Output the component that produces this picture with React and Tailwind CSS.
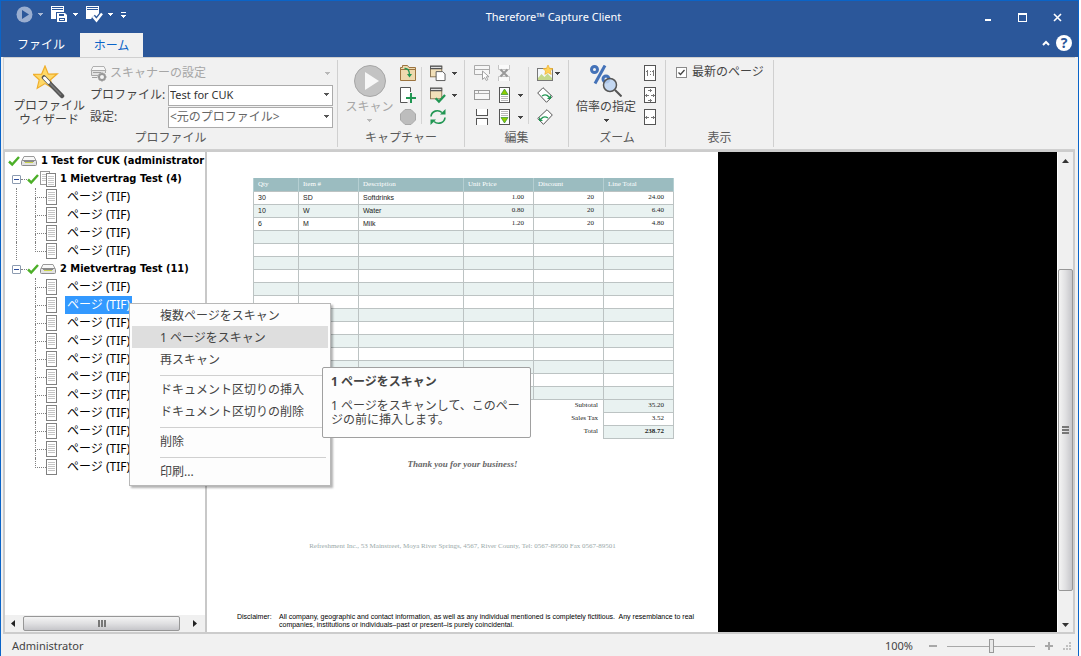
import React, { useState } from 'react';

const items = [
  { qty: '30', item: 'SD', desc: 'Softdrinks', price: '1.00', discount: '20', total: '24.00' },
  { qty: '10', item: 'W', desc: 'Water', price: '0.80', discount: '20', total: '6.40' },
  { qty: '6', item: 'M', desc: 'Milk', price: '1.20', discount: '20', total: '4.80' },
];
const emptyRows = 13;

const documents = [
  { name: '1 Mietvertrag Test (4)', icon: 'pages', pages: 4 },
  { name: '2 Mietvertrag Test (11)', icon: 'scanner', pages: 11, selected: 1 },
];

/* ---------- Icons ---------- */

function Caret({ className = 'text-[#444444]' }) {
  return (
    <svg width="5" height="3" viewBox="0 0 5 3" className={`shrink-0 ${className}`} shapeRendering="crispEdges">
      <path d="M0 0h5v1H4v1H3v1H2V2H1V1H0z" fill="currentColor" />
    </svg>
  );
}

function Check() {
  return (
    <svg width="12" height="12" viewBox="0 0 12 12" className="shrink-0">
      <path d="M1 6.5l3.2 3L11 2" fill="none" stroke="#4caf28" strokeWidth="2.4" />
    </svg>
  );
}

function ScannerIcon() {
  return (
    <svg width="16" height="16" viewBox="0 0 16 16" className="shrink-0">
      <path d="M3 3.5h10l2 4H1z" fill="#f8f8f8" stroke="#9a9a9a" />
      <rect x=".5" y="7.5" width="15" height="5" rx="1" fill="#e2e2e2" stroke="#8c8c8c" />
      <rect x="3" y="8" width="10" height="1" fill="#8a8a8a" />
      <rect x="4" y="9" width="8" height="1" fill="#c9d34a" />
    </svg>
  );
}

function PagesIcon() {
  return (
    <svg width="16" height="16" viewBox="0 0 16 16" className="shrink-0" shapeRendering="crispEdges">
      <rect x=".5" y=".5" width="9" height="13" fill="#fff" stroke="#9a9a9a" />
      <path d="M2 3.5h5M2 5.5h5M2 7.5h5M2 9.5h5" stroke="#c8c8c8" />
      <rect x="6.5" y="2.5" width="9" height="13" fill="#fff" stroke="#808080" />
      <path d="M8 5.5h6M8 7.5h6M8 9.5h6M8 11.5h6M8 13.5h6" stroke="#c8c8c8" />
    </svg>
  );
}

function PageIcon() {
  return (
    <svg width="11" height="16" viewBox="0 0 11 16" className="shrink-0" shapeRendering="crispEdges">
      <rect x=".5" y=".5" width="10" height="15" fill="#fff" stroke="#808080" />
      <path d="M2 3.5h7M2 5.5h7M2 7.5h7M2 9.5h7M2 11.5h7" stroke="#c4c4c4" />
    </svg>
  );
}

function WandIcon() {
  return (
    <svg width="32" height="34" viewBox="0 0 32 34">
      <path d="M12 1l3.3 8.2 9-.4-6.8 6 2.2 8.4L12 18.6l-7.8 4.6 2-8.4L0 9.3l8.7-.2z" fill="#ffd968" stroke="#efae2c" strokeWidth="1.2" />
      <path d="M11 12.5L29 31" stroke="#555" strokeWidth="4.5" strokeLinecap="round" />
      <path d="M17 18.5l11 11.5" stroke="#7a7a7a" strokeWidth="1.5" />
      <path d="M11.5 13l4 4.3" stroke="#fff" strokeWidth="3" strokeLinecap="round" />
    </svg>
  );
}

function ScannerSettingsIcon() {
  return (
    <svg width="17" height="17" viewBox="0 0 17 17" className="shrink-0">
      <path d="M3 1.5h11l2 4H1z" fill="#f6f6f6" stroke="#b0b0b0" />
      <path d="M8 10.5H1.5v-5h14V8" fill="#e2e2e2" stroke="#a8a8a8" />
      <path d="M3 7.5h8M2 12.5h5" stroke="#a0a0a0" />
      <circle cx="12" cy="12" r="3" fill="#f4f4f4" stroke="#999" strokeWidth="2" />
      <path d="M12 7.5v2M12 14.5v2M7.5 12h2M14.5 12h2M9 9l1 1M14 14l1 1M9 15l1-1M14 10l1-1" stroke="#999" strokeWidth="1.5" />
    </svg>
  );
}

function PlayIcon() {
  return (
    <svg width="32" height="32" viewBox="0 0 32 32">
      <circle cx="16" cy="16" r="15.5" fill="#c3c3c3" stroke="#a6a6a6" />
      <path d="M11 7v18l14-9z" fill="#f7f7f7" />
    </svg>
  );
}

function FolderIcon() {
  return (
    <svg width="16" height="16" viewBox="0 0 16 16">
      <path d="M.5 15.5v-13h2v-2h5l1.5 2h6.5v13z" fill="#eed9ae" stroke="#9c7440" />
      <path d="M1 4.5h14" stroke="#9c7440" />
      <path d="M4.5 3.5c3-.5 5 2 5 6" fill="none" stroke="#219653" strokeWidth="1.4" />
      <path d="M7 9h5l-2.5 3.5z" fill="#219653" />
    </svg>
  );
}

function AddPageIcon() {
  return (
    <svg width="16" height="16" viewBox="0 0 16 16">
      <path d="M10.5 5V.5H.5v15h7" fill="#fff" stroke="#555" />
      <path d="M11 6v10M6 11h10" stroke="#219653" strokeWidth="2" />
    </svg>
  );
}

function StopIcon() {
  return (
    <svg width="16" height="16" viewBox="0 0 16 16">
      <path d="M5 .5h6L15.5 5v6L11 15.5H5L.5 11V5z" fill="#bdbdbd" stroke="#a8a8a8" />
    </svg>
  );
}

function BatchIcon({ check }) {
  return (
    <svg width="17" height="17" viewBox="0 0 17 17">
      <rect x=".5" y="1" width="12" height="11" fill="#f1dfb8" stroke="#8a7350" />
      <rect x="0" y="0" width="13" height="4" fill="#555" />
      <path d="M1 2h11" stroke="#fff" />
      {check ? (
        <path d="M6 11.5l3.5 3.5L16 8" fill="none" stroke="#219653" strokeWidth="2.4" />
      ) : (
        <path d="M6.5 6.5h7l2.5 2.5v7H6.5z" fill="#fff" stroke="#555" />
      )}
    </svg>
  );
}

function RefreshIcon() {
  return (
    <svg width="16" height="16" viewBox="0 0 16 16">
      <path d="M1 7.5C1.5 2 8 0 12 3.5M15 8.5C14.5 14 8 16 4 12.5" fill="none" stroke="#219653" strokeWidth="1.6" />
      <path d="M10 5.5h5.5V0zM6 10.5H.5V16z" fill="#219653" />
    </svg>
  );
}

function SelectRowIcon() {
  return (
    <svg width="16" height="16" viewBox="0 0 16 16">
      <path d="M8 9.5H.5v-9h15V9" fill="#f6f6f6" stroke="#aaa" />
      <path d="M1 4.5h14" stroke="#aaa" />
      <path d="M8.5 6v8.5l2.2-2 1.6 3 1.5-.8-1.5-2.9h2.7z" fill="#fff" stroke="#a0a0a0" />
    </svg>
  );
}

function DeleteBreakIcon() {
  return (
    <svg width="12" height="16" viewBox="0 0 12 16">
      <path d="M.5 0v4.5h11V0M.5 16v-4.5h11V16" fill="#fafafa" stroke="#c4c4c4" />
      <path d="M2.5 4.5l7 7M9.5 4.5l-7 7" stroke="#999" strokeWidth="2" />
    </svg>
  );
}

function RowIcon() {
  return (
    <svg width="16" height="10" viewBox="0 0 16 10" shapeRendering="crispEdges">
      <rect x=".5" y=".5" width="15" height="9" fill="#f6f6f6" stroke="#999" />
      <path d="M1 3.5h14M4.5 1v3" stroke="#aaa" />
    </svg>
  );
}

function SplitIcon() {
  return (
    <svg width="12" height="16" viewBox="0 0 12 16" shapeRendering="crispEdges">
      <path d="M.5 0v6.5h11V0M.5 16V9.5h11V16" fill="#fff" stroke="#555" />
    </svg>
  );
}

function MovePageIcon({ down }) {
  return (
    <svg width="11" height="16" viewBox="0 0 11 16">
      <rect x=".5" y=".5" width="10" height="15" fill="#fff" stroke="#555" />
      {down ? (
        <>
          <path d="M2 2.5h7M2 4.5h7M2 6.5h7" stroke="#b8b8b8" />
          <path d="M2 8.5h7l-3.5 5.5z" fill="#8fce00" stroke="#2f8f2f" strokeWidth=".7" />
        </>
      ) : (
        <>
          <path d="M2 9.5h7M2 11.5h7M2 13.5h7" stroke="#b8b8b8" />
          <path d="M2 7.5h7L5.5 2z" fill="#8fce00" stroke="#2f8f2f" strokeWidth=".7" />
        </>
      )}
    </svg>
  );
}

function ImageIcon() {
  return (
    <svg width="16" height="16" viewBox="0 0 16 16">
      <rect x=".5" y="3.5" width="15" height="12" fill="#f4f8fb" stroke="#777" />
      <path d="M1 13l3.5-4 3 3 3-3.5L15 13v2H1z" fill="#c5d98a" />
      <path d="M11 0l1.5 3.3 3.5.3-2.6 2.3.8 3.5L11 7.6 7.8 9.4l.8-3.5L6 3.6l3.5-.3z" fill="#ffd257" stroke="#efb02e" strokeWidth=".7" />
    </svg>
  );
}

function RotateIcon({ left }) {
  return (
    <svg width="16" height="16" viewBox="0 0 16 16">
      {left ? (
        <>
          <path d="M10 .7l5.3 5.3L6.5 15.3.7 9.5z" fill="#fff" stroke="#555" />
          <path d="M4 10c2-2.5 4-3 7-1" fill="none" stroke="#219653" strokeWidth="1.4" />
          <path d="M2 8v4h4z" fill="#219653" />
        </>
      ) : (
        <>
          <path d="M6 .7L.7 6l8.8 9.3 5.8-5.8z" fill="#fff" stroke="#555" />
          <path d="M12 10c-2-2.5-4-3-7-1" fill="none" stroke="#219653" strokeWidth="1.4" />
          <path d="M14 8v4h-4z" fill="#219653" />
        </>
      )}
    </svg>
  );
}

function PercentIcon() {
  return (
    <svg width="32" height="32" viewBox="0 0 32 32">
      <circle cx="4.5" cy="4.5" r="3" fill="none" stroke="#4472b8" strokeWidth="3" />
      <circle cx="16" cy="14" r="3" fill="none" stroke="#4472b8" strokeWidth="3" />
      <path d="M15 .5L5 18.5" stroke="#4472b8" strokeWidth="3" />
      <circle cx="20" cy="20" r="6.5" fill="#bcd4f2" fillOpacity=".85" stroke="#555" strokeWidth="1.5" />
      <path d="M25 25l6.5 6.5" stroke="#555" strokeWidth="2" />
    </svg>
  );
}

function ZoomPageIcon({ mode }) {
  return (
    <svg width="12" height="16" viewBox="0 0 12 16" shapeRendering="crispEdges">
      <rect x=".5" y=".5" width="11" height="15" fill="#fff" stroke="#555" />
      {mode === 'actual' && <path d="M3.5 5v6M2 6.5h2M9.5 5v6M8 6.5h2M6 6v1M6 9v1" stroke="#777" />}
      {mode !== 'actual' && <path d="M1 8.5h4M7 8.5h4M2.5 7v3M9.5 7v3" stroke="#777" />}
      {mode === 'page' && <path d="M6 2v3M6 12v3M4 3.5h4M4 13.5h4" stroke="#777" />}
    </svg>
  );
}

function QuickIcon({ check }) {
  return (
    <svg width="17" height="17" viewBox="0 0 17 17">
      <rect x="0" y="0" width="13" height="13" fill="#fff" />
      <path d="M1 1.5h11M1 3.5h11" stroke="#2b579a" />
      {check ? (
        <>
          <path d="M7 10.5l3.5 4L16 7.5" fill="none" stroke="#2b579a" strokeWidth="5" />
          <path d="M7 10.5l3.5 4L16 7.5" fill="none" stroke="#fff" strokeWidth="2.4" />
        </>
      ) : (
        <>
          <rect x="5" y="6" width="12" height="11" fill="#2b579a" />
          <path d="M6 7h8l2 2v7H6z" fill="#fff" />
          <path d="M8 8h5v2H8zM8 12h6v3H8z" fill="#2b579a" />
          <path d="M9 13.5h4" stroke="#fff" />
        </>
      )}
    </svg>
  );
}

/* ---------- Title bar ---------- */

function TitleBar() {
  return (
    <header className="bg-[#2b579a] text-white">
      <div className="flex h-8 items-center">
        <div className="flex h-full w-[136px] items-center gap-[5px] pl-[15px] pb-[5px]">
          <button aria-label="スキャン">
            <svg width="17" height="17" viewBox="0 0 17 17">
              <circle cx="8.5" cy="8.5" r="8" fill="#9aaed0" />
              <path d="M6 4v9l7-4.5z" fill="#2b579a" />
            </svg>
          </button>
          <button aria-label="スキャン メニュー"><Caret className="text-[#a9b9d5]" /></button>
          <button aria-label="保存" className="ml-[3px]"><QuickIcon /></button>
          <button aria-label="保存 メニュー"><Caret className="text-white" /></button>
          <button aria-label="完了" className="ml-[3px]"><QuickIcon check /></button>
          <button aria-label="完了 メニュー"><Caret className="text-white" /></button>
          <button aria-label="カスタマイズ" className="ml-[3px] flex flex-col items-center gap-[2px]">
            <span className="h-px w-[5px] bg-white" />
            <Caret className="text-white" />
          </button>
        </div>
        <h1 className="flex-1 text-center text-[11px]">Therefore™ Capture Client</h1>
        <div className="mr-[3px] flex">
          <button aria-label="最小化" className="flex h-6 w-[35px] items-center justify-center">
            <span className="mt-[6px] h-[2px] w-[6px] bg-white" />
          </button>
          <button aria-label="最大化" className="flex h-6 w-[35px] items-center justify-center">
            <span className="h-[9px] w-[9px] border border-t-2 border-white" />
          </button>
          <button aria-label="閉じる" className="flex h-6 w-[35px] items-center justify-center">
            <svg width="9" height="9" viewBox="0 0 9 9"><path d="M1 1l7 7M8 1L1 8" stroke="#fff" strokeWidth="1.6" /></svg>
          </button>
        </div>
      </div>
      <nav className="flex h-6 items-start pl-[5px]">
        <button className="h-6 w-[74px] pr-1 text-center">ファイル</button>
        <button className="h-[25px] w-[63px] bg-[#f1f1f1] text-center text-[#0a64c8]">ホーム</button>
        <div className="ml-auto mr-[6px] flex items-center gap-[6px] pt-[2px]">
          <button aria-label="リボンを折りたたむ">
            <svg width="8" height="6" viewBox="0 0 8 6"><path d="M1 5l3-3 3 3" fill="none" stroke="#fff" strokeWidth="2" /></svg>
          </button>
          <button aria-label="ヘルプ" className="h-4 w-4 rounded-full bg-white text-sm leading-4 font-bold text-[#2b579a]">?</button>
        </div>
      </nav>
    </header>
  );
}

/* ---------- Ribbon ---------- */

function Group({ label, className, children }) {
  return (
    <section className={`flex shrink-0 flex-col border-r border-[#d0d0d0] ${className}`}>
      <div className="flex h-[67px] pt-[2px]">{children}</div>
      <div className="mt-[2px] h-[18px] text-center leading-[18px] text-[#5a5a5a]">{label}</div>
    </section>
  );
}

function IconButton({ label, caret, disabled, className = 'w-4', children }) {
  return (
    <div className="flex h-[22px] items-center gap-[6px]">
      <button aria-label={label} disabled={disabled} className={`flex justify-center ${className}`}>{children}</button>
      {caret && <button aria-label={`${label} メニュー`}><Caret /></button>}
    </div>
  );
}

function ComboBox({ id, label, value, muted }) {
  return (
    <div className="flex h-[22px] items-center">
      <label htmlFor={id} className="w-[78px] whitespace-nowrap">{label}</label>
      <div className="relative">
        <select id={id} className={`block h-[21px] w-[165px] appearance-none border border-[#ababab] bg-white pl-[1px] ${muted ? 'text-xs text-[#666666]' : 'text-[11px] text-[#333333]'}`}>
          <option>{value}</option>
        </select>
        <span className="pointer-events-none absolute top-2 right-1"><Caret className="text-[#555555]" /></span>
      </div>
    </div>
  );
}

function Divider() {
  return <div className="mt-[5px] h-[57px] w-px bg-[#d4d4d4]" />;
}

function Ribbon() {
  const [latest, setLatest] = useState(true);
  return (
    <div className="mr-[3px] ml-[2px] flex border-t border-b border-l border-[#d0d0d0] pt-[2px] pb-[2px] text-[#444444]">
      <Group label="プロファイル" className="w-[334px]">
        <button className="ml-[7px] flex w-[76px] flex-col items-center pt-[3px] leading-[14px]">
          <WandIcon />
          <span className="whitespace-nowrap">プロファイル</span>
          <span>ウィザード</span>
        </button>
        <div className="ml-[3px]">
          <button disabled className="flex h-[22px] w-[240px] items-center gap-[3px] text-[#a6a6a6]">
            <ScannerSettingsIcon />
            <span>スキャナーの設定</span>
            <span className="ml-auto"><Caret className="text-[#b8b8b8]" /></span>
          </button>
          <ComboBox id="profile" label="プロファイル:" value="Test for CUK" />
          <ComboBox id="setting" label="設定:" value="<元のプロファイル>" muted />
        </div>
      </Group>

      <Group label="キャプチャー" className="w-[127px]">
        <button disabled className="ml-[6px] flex w-[51px] flex-col items-center pt-[3px] text-[#a6a6a6]">
          <PlayIcon />
          <span className="mt-[2px] leading-4 whitespace-nowrap">スキャン</span>
          <span className="mt-1"><Caret className="text-[#b8b8b8]" /></span>
        </button>
        <div className="ml-[5px]">
          <IconButton label="ファイルの取り込み"><FolderIcon /></IconButton>
          <IconButton label="ページの追加"><AddPageIcon /></IconButton>
          <IconButton label="停止" disabled><StopIcon /></IconButton>
        </div>
        <div className="ml-[5px]"><Divider /></div>
        <div className="ml-2">
          <IconButton label="バッチの保存" caret><BatchIcon /></IconButton>
          <IconButton label="バッチの完了" caret><BatchIcon check /></IconButton>
          <IconButton label="更新"><RefreshIcon /></IconButton>
        </div>
      </Group>

      <Group label="編集" className="w-[104px]">
        <div className="ml-[9px]">
          <IconButton label="行の選択" disabled><SelectRowIcon /></IconButton>
          <IconButton label="行" disabled><RowIcon /></IconButton>
          <IconButton label="分割"><SplitIcon /></IconButton>
        </div>
        <div className="ml-[6px]">
          <IconButton label="区切りの削除" disabled><DeleteBreakIcon /></IconButton>
          <IconButton label="上へ移動" caret><MovePageIcon /></IconButton>
          <IconButton label="下へ移動" caret><MovePageIcon down /></IconButton>
        </div>
        <div className="ml-[5px]"><Divider /></div>
        <div className="ml-2">
          <div className="flex h-[22px] items-center gap-[2px]">
            <button aria-label="画像の編集"><ImageIcon /></button>
            <button aria-label="画像の編集 メニュー"><Caret /></button>
          </div>
          <IconButton label="右に回転"><RotateIcon /></IconButton>
          <IconButton label="左に回転"><RotateIcon left /></IconButton>
        </div>
      </Group>

      <Group label="ズーム" className="w-[97px]">
        <button className="ml-1 flex w-[66px] flex-col items-center pt-[3px]">
          <PercentIcon />
          <span className="mt-[2px] leading-4 whitespace-nowrap">倍率の指定</span>
          <span className="mt-1"><Caret /></span>
        </button>
        <div className="ml-[3px]">
          <IconButton label="実際のサイズ"><ZoomPageIcon mode="actual" /></IconButton>
          <IconButton label="ページ全体"><ZoomPageIcon mode="page" /></IconButton>
          <IconButton label="ページ幅"><ZoomPageIcon mode="width" /></IconButton>
        </div>
      </Group>

      <Group label="表示" className="w-[108px]">
        <label className="ml-[10px] flex h-5 items-center gap-[5px] whitespace-nowrap">
          <span className="relative flex">
            <input
              type="checkbox"
              checked={latest}
              onChange={e => setLatest(e.target.checked)}
              className="h-[11px] w-[11px] appearance-none border border-[#8a8a8a] bg-white"
            />
            {latest && (
              <svg width="11" height="11" viewBox="0 0 11 11" className="pointer-events-none absolute inset-0">
                <path d="M2.5 5.5l2 2 4-4.5" fill="none" stroke="#444" strokeWidth="1.3" />
              </svg>
            )}
          </span>
          最新のページ
        </label>
      </Group>
    </div>
  );
}

/* ---------- Tree ---------- */

// dotted elbow between a parent and its row
function Elbow({ last, className }) {
  return (
    <span className={`flex h-[18px] shrink-0 flex-col ${className}`}>
      <span className="h-[10px] border-b border-l border-dotted border-[#808080]" />
      <span className={`h-2 ${last ? '' : 'border-l border-dotted border-[#808080]'}`} />
    </span>
  );
}

function TreePanel() {
  const bold = "font-['DejaVu_Sans_Condensed','Noto_Sans',sans-serif] text-[11px] font-bold";
  return (
    <aside className="flex w-[200px] shrink-0 flex-col bg-white text-black">
      <div className="flex-1 overflow-hidden leading-[18px] whitespace-nowrap">
        <div className="flex h-[18px] items-center gap-px pl-[3px]">
          <Check />
          <ScannerIcon />
          <span className={`pl-[3px] leading-[18px] ${bold}`}>1 Test for CUK (administrator</span>
        </div>
        <ul>
          {documents.map((doc, d) => (
            <li key={doc.name}>
              <div className="flex h-[18px] items-center pl-[7px]">
                <button aria-label="折りたたむ" className="flex h-[9px] w-[9px] items-center justify-center rounded-[1px] border border-[#8c9bb0] bg-white">
                  <span className="h-px w-[5px] bg-[#2c4b9b]" />
                </button>
                <span className="w-[6px] border-b border-dotted border-[#808080]" />
                <Check />
                <span className="ml-px">{doc.icon === 'pages' ? <PagesIcon /> : <ScannerIcon />}</span>
                <span className={`pl-1 leading-[18px] ${bold}`}>{doc.name}</span>
              </div>
              <ul>
                {Array.from({ length: doc.pages }, (_, i) => (
                  <li key={i} className="flex h-[18px] items-center pl-[11px]">
                    <span className={`h-[18px] w-[19px] shrink-0 ${d === 0 ? 'border-l border-dotted border-[#808080]' : ''}`} />
                    <Elbow last={i === doc.pages - 1} className="w-[11px]" />
                    <PageIcon />
                    <span className={`ml-2 w-[67px] pl-[2px] ${doc.selected === i ? 'bg-[#3399ff] text-white' : ''}`}>ページ (TIF)</span>
                  </li>
                ))}
              </ul>
            </li>
          ))}
        </ul>
      </div>
      <div className="flex h-[17px] items-center bg-[#f0f0f0]">
        <svg width="18" height="7" viewBox="0 0 18 7" className="shrink-0"><path d="M10 0v7L6 3.5z" fill="#222" /></svg>
        <div className="flex h-[15px] w-[157px] items-center justify-center gap-px rounded-[2px] border border-[#979797] bg-linear-to-b from-[#f4f4f4] via-[#e0e0e2] to-[#c6c6ca]">
          <span className="h-[7px] w-[2px] bg-[#777777]" />
          <span className="h-[7px] w-[2px] bg-[#777777]" />
          <span className="h-[7px] w-[2px] bg-[#777777]" />
        </div>
        <svg width="24" height="7" viewBox="0 0 24 7" className="shrink-0"><path d="M13 0v7l4-3.5z" fill="#222" /></svg>
      </div>
    </aside>
  );
}

/* ---------- Scanned page ---------- */

function Invoice() {
  const cell = 'h-[13px] border border-[#bcc3c3] p-0 pl-1';
  const num = "h-[13px] border border-[#bcc3c3] p-0 pr-[9px] text-right font-['Liberation_Serif',serif]";
  const head = 'h-[13px] border-x border-[#b5cfd2] p-0 pl-1 text-left font-normal';
  return (
    <div className="w-[511px] shrink-0 overflow-hidden bg-white font-['Liberation_Sans',sans-serif] text-[7px] leading-[9px] text-[#222222]">
      <div className="mt-[26px] ml-[46px] w-[420px]">
        <table className="w-full table-fixed border-collapse">
          <colgroup>
            <col className="w-[45px]" />
            <col className="w-[60px]" />
            <col className="w-[105px]" />
            <col className="w-[70px]" />
            <col className="w-[70px]" />
            <col className="w-[70px]" />
          </colgroup>
          <thead>
            <tr className="bg-[#9bbcc0] font-['Liberation_Serif',serif] text-white">
              <th className={head}>Qty</th>
              <th className={head}>Item #</th>
              <th className={head}>Description</th>
              <th className={head}>Unit Price</th>
              <th className={head}>Discount</th>
              <th className={head}>Line Total</th>
            </tr>
          </thead>
          <tbody>
            {items.map(row => (
              <tr key={row.item} className="even:bg-[#e9f2f1]">
                <td className={cell}>{row.qty}</td>
                <td className={cell}>{row.item}</td>
                <td className={cell}>{row.desc}</td>
                <td className={num}>{row.price}</td>
                <td className={num}>{row.discount}</td>
                <td className={num}>{row.total}</td>
              </tr>
            ))}
            {Array.from({ length: emptyRows }, (_, i) => (
              <tr key={i} className="even:bg-[#e9f2f1]">
                <td className={cell} />
                <td className={cell} />
                <td className={cell} />
                <td className={cell} />
                <td className={cell} />
                <td className={cell} />
              </tr>
            ))}
          </tbody>
          <tfoot className="font-['Liberation_Serif',serif]">
            <tr>
              <td colSpan="5" className="h-[13px] p-0 pr-[5px] text-right">Subtotal</td>
              <td className={`${num} bg-[#e9f2f1]`}>35.20</td>
            </tr>
            <tr>
              <td colSpan="5" className="h-[13px] p-0 pr-[5px] text-right">Sales Tax</td>
              <td className={num}>3.52</td>
            </tr>
            <tr>
              <td colSpan="5" className="h-[13px] p-0 pr-[5px] text-right">Total</td>
              <td className={`${num} bg-[#e9f2f1] font-bold`}>238.72</td>
            </tr>
          </tfoot>
        </table>
      </div>
      <p className="mt-[19px] text-center font-['Liberation_Serif',serif] text-[9px] leading-3 font-bold text-[#666666] italic">Thank you for your business!</p>
      <p className="mt-[70px] text-center font-['Liberation_Serif',serif] text-[7px] leading-3 whitespace-nowrap text-[#9aa9a9]">
        Refreshment Inc., 53 Mainstreet, Moya River Springs, 4567, River County, Tel: 0567-89500 Fax 0567-89501
      </p>
      <div className="mt-[61px] flex pl-[30px] leading-2 text-black">
        <span className="w-[42px] shrink-0">Disclaimer:</span>
        <p className="w-[424px]">
          All company, geographic and contact information, as well as any individual mentioned is completely fictitious.&nbsp; Any resemblance to real companies, institutions or individuals–past or present–is purely coincidental.
        </p>
      </div>
    </div>
  );
}

function VerticalScrollbar() {
  return (
    <div className="flex w-4 shrink-0 flex-col items-center border-l border-white bg-[#f0f0f0]">
      <svg width="7" height="4" viewBox="0 0 7 4" className="mt-[7px] shrink-0"><path d="M0 4h7L3.5 0z" fill="#333" /></svg>
      <div className="mt-[106px] flex w-[15px] flex-1 flex-col items-center justify-center gap-px rounded-[2px] border border-[#979797] bg-linear-to-r from-[#f4f4f4] via-[#e0e0e2] to-[#c6c6ca]">
        <span className="h-[2px] w-[7px] bg-[#777777]" />
        <span className="h-[2px] w-[7px] bg-[#777777]" />
        <span className="h-[2px] w-[7px] bg-[#777777]" />
      </div>
      <svg width="7" height="4" viewBox="0 0 7 4" className="mt-8 mb-[5px] shrink-0"><path d="M0 0h7L3.5 4z" fill="#333" /></svg>
    </div>
  );
}

/* ---------- Popups ---------- */

function MenuItem({ active, children }) {
  return (
    <button role="menuitem" className={`flex h-[22px] w-full items-center pt-[2px] pl-7 whitespace-nowrap ${active ? 'bg-[#dedede]' : ''}`}>{children}</button>
  );
}

function MenuLine() {
  return <div className="mt-[5px] mr-[2px] mb-[2px] ml-7 h-px bg-[#d0d0d0]" />;
}

function ContextMenu() {
  return (
    <div role="menu" className="absolute top-[151px] left-[124px] w-[202px] border border-[#b8b8b8] bg-[#fdfdfd] px-[2px] pb-[3px] text-[#444444] shadow-[2px_2px_2px_rgba(0,0,0,0.3)]">
      <MenuItem>複数ページをスキャン</MenuItem>
      <MenuItem active>1 ページをスキャン</MenuItem>
      <MenuItem>再スキャン</MenuItem>
      <MenuLine />
      <MenuItem>ドキュメント区切りの挿入</MenuItem>
      <MenuItem>ドキュメント区切りの削除</MenuItem>
      <MenuLine />
      <MenuItem>削除</MenuItem>
      <MenuLine />
      <MenuItem>印刷...</MenuItem>
    </div>
  );
}

function Tooltip() {
  return (
    <div role="tooltip" className="absolute top-[215px] left-[317px] h-[71px] w-[209px] rounded-[2px] border border-[#a0a0a0] bg-[#fdfdfd] px-2 pt-[7px] leading-[14px] text-[#444444]">
      <div className="font-bold">1 ページをスキャン</div>
      <p className="mt-[10px] whitespace-nowrap">1 ページをスキャンして、このペー<br />ジの前に挿入します。</p>
    </div>
  );
}

function StatusBar() {
  const [zoom, setZoom] = useState(50);
  return (
    <footer className="flex h-[22px] items-center pt-[2px] pr-[7px] pl-[11px] text-[11px] text-[#444444]">
      <span>Administrator</span>
      <label htmlFor="zoom" className="ml-auto">100%</label>
      <button aria-label="縮小" className="ml-4 flex h-2 w-2 items-center"><span className="h-[2px] w-2 bg-[#a8a8a8]" /></button>
      <input
        id="zoom"
        type="range"
        value={zoom}
        onChange={e => setZoom(e.target.value)}
        className="mx-[10px] h-[14px] w-[88px] appearance-none bg-linear-to-r from-[#a8a8a8] to-[#a8a8a8] bg-[length:100%_1px] bg-center bg-no-repeat [&::-webkit-slider-thumb]:h-[14px] [&::-webkit-slider-thumb]:w-[5px] [&::-webkit-slider-thumb]:appearance-none [&::-webkit-slider-thumb]:border [&::-webkit-slider-thumb]:border-[#999999] [&::-webkit-slider-thumb]:bg-[#e8e8e8]"
      />
      <button aria-label="拡大">
        <svg width="8" height="8" viewBox="0 0 8 8"><path d="M4 0v8M0 4h8" stroke="#a8a8a8" strokeWidth="2" /></svg>
      </button>
      <svg width="8" height="8" viewBox="0 0 8 8" className="ml-[10px]" shapeRendering="crispEdges">
        <path d="M6 0h2v2H6zM3 3h2v2H3zM6 3h2v2H6zM0 6h2v2H0zM3 6h2v2H3zM6 6h2v2H6z" fill="#c0c0c0" />
      </svg>
    </footer>
  );
}

export default function App() {
  return (
    <div className="flex min-h-screen bg-white pr-[2px] font-['Noto_Sans','Noto_Sans_CJK_JP',sans-serif] text-xs">
      <div className="flex min-w-0 flex-1 flex-col border border-b-0 border-[#0a64c8] bg-[#f1f1f1]">
        <TitleBar />
        <Ribbon />
        <main className="relative mr-[3px] ml-[2px] flex flex-1 border-2 border-[#cccccc]">
          <TreePanel />
          <div className="w-[2px] shrink-0 bg-[#c8c8c8]" />
          <div className="flex min-w-0 flex-1 bg-black"><Invoice /></div>
          <VerticalScrollbar />
          <ContextMenu />
          <Tooltip />
        </main>
        <StatusBar />
      </div>
    </div>
  );
}
